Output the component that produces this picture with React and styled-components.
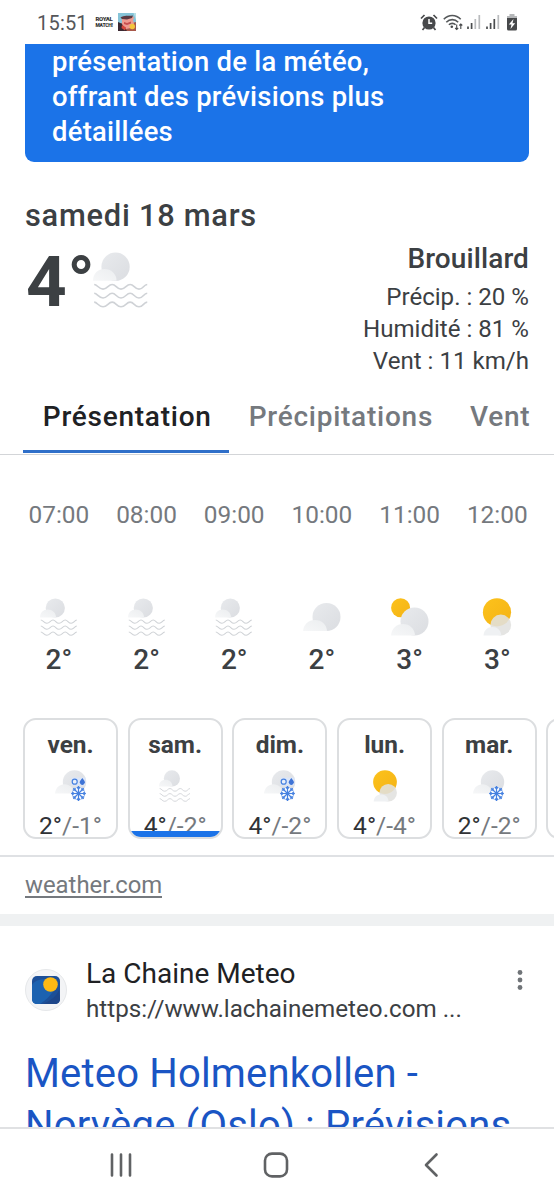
import React from "react";
import styled, { createGlobalStyle } from "styled-components";

const GlobalStyle = createGlobalStyle`
  * { box-sizing: border-box; }
  html, body { margin: 0; padding: 0; background: #fff; }
  body { font-family: Roboto, "Liberation Sans", sans-serif; color: #3c4043; overflow: hidden; }
  svg { display: block; flex: none; }
`;

const Screen = styled.div`
  width: 554px;
  height: 1200px;
  display: flex;
  flex-direction: column;
  overflow: hidden;
  background: #fff;
`;

const StatusBar = styled.header`
  flex: none;
  height: 44px;
  display: flex;
  align-items: center;
  padding: 0 36px 0 37px;
`;
const Clock = styled.span`
  width: 58px;
  font-size: 20px;
  line-height: 44px;
  letter-spacing: 0.2px;
  color: #55575a;
  padding-top: 2px;
`;
const GameLogo = styled.span`
  width: 18px;
  margin-right: 5px;
  font-weight: 900;
  text-align: center;
  color: #333;
  letter-spacing: -0.3px;
  white-space: nowrap;
`;
const LogoLine = styled.span`
  display: block;
  line-height: 7px;
  font-size: ${(p) => p.$size}px;
`;
const StatusIcons = styled.div`
  margin-left: auto;
  display: flex;
  align-items: center;
`;
const StatusIcon = styled.svg`
  margin-left: ${(p) => p.$gap}px;
`;

const Page = styled.main`
  flex: none;
  height: 1083px;
  overflow: hidden;
`;
const Banner = styled.section`
  height: 118px;
  margin: 0 25px;
  padding: 1px 27px 0;
  border-radius: 0 0 9px 9px;
  background: #1b73e8;
  color: #fff;
  font-weight: 500;
  font-size: 27.4px;
  line-height: 35px;
  letter-spacing: 0.26px;
`;
const BannerLine = styled.div`
  white-space: nowrap;
`;

const Summary = styled.section`
  height: 214px;
  padding: 34px 25px 0;
`;
const DateLine = styled.h2`
  margin: 0;
  font-size: 30.8px;
  font-weight: 500;
  line-height: 40px;
  letter-spacing: 0.75px;
`;
const SummaryRow = styled.div`
  display: flex;
  justify-content: space-between;
`;
const Current = styled.div`
  display: flex;
  align-items: flex-start;
`;
const BigTemp = styled.div`
  width: 68px;
  padding-left: 1px;
  font-size: 71px;
  font-weight: 700;
  line-height: 92px;
  letter-spacing: 0.5px;
  white-space: nowrap;
`;
const BigIcon = styled.div`
  padding-top: 16px;
`;
const Details = styled.div`
  text-align: right;
  padding-top: 6px;
`;
const Condition = styled.div`
  margin-bottom: 5px;
  font-size: 28px;
  font-weight: 500;
  line-height: 34px;
  letter-spacing: 0.1px;
`;
const Detail = styled.div`
  font-size: 24.1px;
  line-height: 32.2px;
  white-space: nowrap;
`;

const Tabs = styled.nav`
  height: 79px;
  padding-left: 23px;
  display: flex;
  border-bottom: 1px solid #d3d5d8;
`;
const Tab = styled.div`
  flex: none;
  height: 77px;
  padding: 0 ${(p) => p.$right}px 0 ${(p) => p.$left}px;
  font-size: 28px;
  font-weight: 500;
  line-height: 82px;
  letter-spacing: 0.75px;
  white-space: nowrap;
  color: ${(p) => (p.$active ? "#202124" : "#75797e")};
  border-bottom: ${(p) => (p.$active ? "3px solid #2f6fc9" : "0")};
`;

const Hours = styled.section`
  height: 263px;
  padding: 0 13px 0 15px;
  display: flex;
`;
const Hour = styled.div`
  flex: none;
  width: 87.7px;
  display: flex;
  flex-direction: column;
  align-items: center;
`;
const HourLabel = styled.div`
  margin-top: 44px;
  font-size: 24.4px;
  line-height: 32px;
  color: #75797e;
`;
const HourIcon = styled.div`
  margin-top: 67px;
`;
const HourTemp = styled.div`
  margin-top: 7px;
  font-size: 28px;
  font-weight: 500;
  line-height: 34px;
`;

const Days = styled.section`
  height: 139px;
  padding-left: 23px;
  display: flex;
  gap: 9.7px;
  border-bottom: 2px solid #dfe1e4;
  overflow: hidden;
`;
const DayCard = styled.div`
  flex: none;
  width: 95px;
  height: 121px;
  border: 2px solid #dcdee0;
  border-radius: 13px;
  overflow: hidden;
  display: flex;
  flex-direction: column;
  align-items: center;
`;
const DayName = styled.div`
  margin-top: 9px;
  font-size: 24.4px;
  font-weight: 700;
  line-height: 32px;
`;
const DayIcon = styled.div`
  flex: none;
  margin-top: 9px;
  height: 34px;
`;
const DayRange = styled.div`
  flex: none;
  margin-top: 6px;
  height: ${(p) => (p.$active ? 20.5 : 32)}px;
  overflow: hidden;
  font-size: 24.6px;
  line-height: 32px;
  color: #75797e;
  white-space: nowrap;
  b { font-weight: 400; color: #303236; }
`;
const ActiveBar = styled.div`
  flex: none;
  align-self: stretch;
  height: 8px;
  background: #1b73e8;
`;

const Source = styled.div`
  height: 57px;
  padding: 12px 25px 0;
  font-size: 23.9px;
  line-height: 32px;
  color: #75797e;
`;
const SourceLink = styled.span`
  display: inline-block;
  height: 29px;
  border-bottom: 2px solid #75797e;
`;
const Divider = styled.div`
  height: 12px;
  background: #eff1f2;
`;

const Result = styled.article`
  padding: 31px 25px 0;
`;
const ResultHead = styled.div`
  display: flex;
  height: 68px;
`;
const Favicon = styled.div`
  width: 42px;
  height: 42px;
  margin: 12px 19px 0 0;
  border-radius: 50%;
  border: 1px solid #e6e8ea;
  background: #f3f4f6;
  display: grid;
  place-items: center;
`;
const Site = styled.div`
  flex: 1;
`;
const SiteName = styled.div`
  font-size: 28px;
  line-height: 34px;
  color: #202124;
`;
const SiteUrl = styled.div`
  margin-top: 1px;
  font-size: 24.2px;
  line-height: 34px;
  white-space: nowrap;
`;
const More = styled.div`
  padding: 12px 6px 0 0;
`;
const ResultTitle = styled.h3`
  margin: 23px 0 0;
  font-size: 40px;
  font-weight: 400;
  line-height: 52px;
  letter-spacing: 0.18px;
  color: #1a55c4;
`;
const TitleLine = styled.div`
  white-space: nowrap;
`;

const NavBar = styled.footer`
  flex: none;
  height: 73px;
  border-top: 2px solid #e0e1e3;
  display: flex;
  justify-content: center;
  align-items: center;
  padding-right: 2px;
`;
const NavButton = styled.div`
  width: 155px;
  display: grid;
  place-items: center;
`;

const GradientDefs = styled.svg`
  position: absolute;
`;

function Gradients() {
  return (
    <GradientDefs width="0" height="0" aria-hidden="true">
      <defs>
        <linearGradient id="cloud" x1="0" y1="0" x2="1" y2="1">
          <stop offset="0" stopColor="#e8eaed" />
          <stop offset="1" stopColor="#dbdde1" />
        </linearGradient>
        <linearGradient id="puff" x1="0" y1="1" x2="1" y2="0">
          <stop offset="0" stopColor="#f6f7f8" />
          <stop offset="1" stopColor="#eceef0" />
        </linearGradient>
        <linearGradient id="sun" x1="0" y1="0" x2="1" y2="1">
          <stop offset="0" stopColor="#fcc21c" />
          <stop offset="1" stopColor="#f4b315" />
        </linearGradient>
      </defs>
    </GradientDefs>
  );
}

function Fog({ size }) {
  return (
    <svg width={size} height={size} viewBox="0 0 38 38">
      <circle cx="15.3" cy="10" r="9.6" fill="url(#cloud)" />
      <path d="M0 19.500C0 14.400 3.500 11.500 7.800 11.500S16 14.600 16 19.500z" fill="url(#puff)" />
      {[22, 28, 34].map((y) => (
        <path
          key={y}
          d={`M.8 ${y}c2.200 0 3 3.200 6 3.200s3.600-3.200 6.200-3.200 3 3.200 6 3.200 3.600-3.200 6.200-3.200 3 3.200 6 3.200 3-3 5.600-3.200`}
          fill="none"
          stroke="#cfd2d6"
          strokeWidth="1.050"
        />
      ))}
    </svg>
  );
}

function Cloud({ size }) {
  return (
    <svg width={size} height={size} viewBox="0 0 38 38">
      <circle cx="23.500" cy="19" r="14" fill="url(#cloud)" />
      <path d="M0 33C.6 26.500 5.400 22 12 22s11.500 4.500 12.100 11z" fill="url(#puff)" />
    </svg>
  );
}

function SunCloud({ size }) {
  return (
    <svg width={size} height={size} viewBox="0 0 38 38">
      <circle cx="9.600" cy="9.800" r="9.500" fill="url(#sun)" />
      <circle cx="23.500" cy="23.500" r="14" fill="url(#cloud)" />
      <path d="M0 37.500C.6 30.500 5.400 26 12 26s11.500 4.500 12.100 11.500z" fill="url(#puff)" />
    </svg>
  );
}

function MostlySunny({ size }) {
  return (
    <svg width={size} height={size} viewBox="0 0 38 38">
      <circle cx="19" cy="14.300" r="14.100" fill="url(#sun)" />
      <circle cx="22.800" cy="27" r="10.400" fill="#e1e1df" fillOpacity=".88" />
      <path d="M5.500 37.500C6 32 9.500 29 14.400 29s8.400 3 8.900 8.500z" fill="#eff1f3" />
    </svg>
  );
}

function Flake({ x, y }) {
  return (
    <g transform={`translate(${x} ${y})`} stroke="#4681e0" strokeWidth="1.150" fill="none">
      {[0, 45, 90, 135, 180, 225, 270, 315].map((a) => (
        <path key={a} d="M0 0V-7.400M-1.700-6.500L0-4.600 1.700-6.500" transform={`rotate(${a})`} />
      ))}
    </g>
  );
}

function Snow({ mixed }) {
  return (
    <svg width="34" height="34" viewBox="0 0 34 34">
      <circle cx="20.500" cy="12" r="11.700" fill="url(#cloud)" />
      <path d="M1 23.500C1.500 18 5.500 14.300 10.500 14.300S19.600 18 20.100 23.500z" fill="url(#puff)" />
      <circle cx="24.500" cy="23.500" r="7" fill="#f3f7fd" />
      <Flake x={24.5} y={23.5} />
      {mixed && (
        <g>
          <rect x="17.500" y="7.500" width="14" height="8" fill="#dce6f7" />
          <circle cx="20.700" cy="11.700" r="2.500" fill="#eaf0fa" stroke="#4681e0" strokeWidth="1.200" />
          <path d="M28.300 8l1.900 2.400a2.600 2.600 0 1 1-3.800 0z" fill="#3f74d6" />
        </g>
      )}
    </svg>
  );
}

const icons = {
  fog: (s) => <Fog size={s} />,
  cloud: (s) => <Cloud size={s} />,
  sunCloud: (s) => <SunCloud size={s} />,
  sunny: (s) => <MostlySunny size={s} />,
  snow: () => <Snow />,
  mixed: () => <Snow mixed />,
};

function PigIcon() {
  return (
    <svg width="18" height="18" viewBox="0 0 18 18">
      <rect width="18" height="18" fill="#86c4d8" />
      <path d="M0 13l4-3h10l4-1v9H0z" fill="#a8584a" />
      <path d="M4 5l2-2 3 1.500L13 3l3 1-1 3 1 4-3 4-5 1-4-4z" fill="#ee9a90" />
      <path d="M2.500 4.500C6 2 10 3 15 2.500L14 5 9 6.500 4 6z" fill="#5a3a42" />
      <path d="M6 9l3 1 4-1.500v2L9 12l-3-1z" fill="#c94f4f" />
      <path d="M0 9l3.500 1.500L9 18H0z" fill="#3b2932" />
      <path d="M4 12l4 2.500-1 3L3.500 15z" fill="#d8463c" />
      <circle cx="14.300" cy="13.500" r="2.700" fill="#f4c53c" />
      <path d="M15.500 0H18v7z" fill="#b7dfe5" />
    </svg>
  );
}

function Signal({ strong, gap }) {
  return (
    <StatusIcon $gap={gap} width="14" height="16" viewBox="0 0 14 16">
      <path d="M1 12.500V15M4.600 9V15" stroke="#4a4c4e" strokeWidth="1.700" />
      <path d="M8.300 5V15" stroke={strong ? "#4a4c4e" : "#b9bbbd"} strokeWidth="1.700" />
      <path d="M12.300 1V15" stroke="#b9bbbd" strokeWidth="1.700" />
    </StatusIcon>
  );
}

const hours = [
  ["07:00", "fog", "2°"],
  ["08:00", "fog", "2°"],
  ["09:00", "fog", "2°"],
  ["10:00", "cloud", "2°"],
  ["11:00", "sunCloud", "3°"],
  ["12:00", "sunny", "3°"],
];

const days = [
  ["ven.", "mixed", "2°", "-1°"],
  ["sam.", "fog", "4°", "-2°"],
  ["dim.", "mixed", "4°", "-2°"],
  ["lun.", "sunny", "4°", "-4°"],
  ["mar.", "snow", "2°", "-2°"],
];

export default function App() {
  return (
    <Screen>
      <GlobalStyle />
      <Gradients />
      <StatusBar>
        <Clock>15:51</Clock>
        <GameLogo>
          <LogoLine $size={6}>ROYAL</LogoLine>
          <LogoLine $size={5}>MATCH!</LogoLine>
        </GameLogo>
        <PigIcon />
        <StatusIcons>
          <StatusIcon $gap={0} width="18" height="17" viewBox="0 0 18 17">
            <circle cx="9" cy="9" r="6.600" fill="#47494b" />
            <path d="M1 4.500L4.500 1M17 4.500L13.500 1M4.500 13.500L2.500 16M13.500 13.500L15.500 16" stroke="#47494b" strokeWidth="1.700" />
            <path d="M9 5v4.200h3.200" stroke="#fff" strokeWidth="1.500" fill="none" />
          </StatusIcon>
          <StatusIcon $gap={5} width="20" height="17" viewBox="0 0 20 17">
            <path d="M.8 5.300C5.500.2 13 .2 17.700 5.300M3.300 8.200c3.400-3.500 8.500-3.500 11.900 0M5.900 10.800c1.900-1.900 4.800-1.900 6.700 0" fill="none" stroke="#55585a" strokeWidth="1.600" />
            <circle cx="8.800" cy="12.700" r="1.300" fill="#47494b" />
            <path d="M13.700 10.500v5M12.200 14l1.500 1.500 1.500-1.500M17.800 15v-5M16.300 11.500l1.500-1.500 1.500 1.500" fill="none" stroke="#47494b" strokeWidth="1.100" />
          </StatusIcon>
          <Signal gap={4} />
          <Signal gap={5} strong />
          <StatusIcon $gap={6} width="12" height="17" viewBox="0 0 12 17">
            <path d="M3.500 0h5v2H11v3H1V2h2.500z" fill="#b5b7b9" />
            <path d="M1 4h10v11a1.500 1.500 0 0 1-1.500 1.500h-7A1.500 1.500 0 0 1 1 15z" fill="#47494b" />
            <path d="M7.500 5L2.800 10.500h2.700L4.500 15l4.700-5.700H6.500z" fill="#fff" />
          </StatusIcon>
        </StatusIcons>
      </StatusBar>

      <Page>
        <Banner>
          <BannerLine>présentation de la météo,</BannerLine>
          <BannerLine>offrant des prévisions plus</BannerLine>
          <BannerLine>détaillées</BannerLine>
        </Banner>

        <Summary>
          <DateLine>samedi 18 mars</DateLine>
          <SummaryRow>
            <Current>
              <BigTemp>4°</BigTemp>
              <BigIcon><Fog size={56} /></BigIcon>
            </Current>
            <Details>
              <Condition>Brouillard</Condition>
              <Detail>Précip. : 20 %</Detail>
              <Detail>Humidité : 81 %</Detail>
              <Detail>Vent : 11 km/h</Detail>
            </Details>
          </SummaryRow>
        </Summary>

        <Tabs>
          <Tab $active $left={19.8} $right={17}>Présentation</Tab>
          <Tab $left={20} $right={19}>Précipitations</Tab>
          <Tab $left={18} $right={18}>Vent</Tab>
        </Tabs>

        <Hours>
          {hours.map(([label, icon, temp]) => (
            <Hour key={label}>
              <HourLabel>{label}</HourLabel>
              <HourIcon>{icons[icon](38)}</HourIcon>
              <HourTemp>{temp}</HourTemp>
            </Hour>
          ))}
        </Hours>

        <Days>
          {days.map(([name, icon, high, low]) => {
            const active = name === "sam.";
            return (
              <DayCard key={name}>
                <DayName>{name}</DayName>
                <DayIcon>{icons[icon](32)}</DayIcon>
                <DayRange $active={active}><b>{high}</b>/{low}</DayRange>
                {active && <ActiveBar />}
              </DayCard>
            );
          })}
          <DayCard />
        </Days>

        <Source><SourceLink>weather.com</SourceLink></Source>
        <Divider />

        <Result>
          <ResultHead>
            <Favicon>
              <svg width="28" height="28" viewBox="0 0 28 28">
                <rect width="28" height="28" rx="5" fill="#1c4f98" />
                <path d="M0 9C3 3 14 1 20 6c5 6 0 14-12 22H5c-3 0-5-2-5-5z" fill="#1c62b0" />
                <path d="M27 14c-3 7-9 11-16 14h12c3 0 5-2 5-5z" fill="#1d468a" />
                <circle cx="18.500" cy="8.500" r="7.300" fill="#fdb913" />
              </svg>
            </Favicon>
            <Site>
              <SiteName>La Chaine Meteo</SiteName>
              <SiteUrl>https://www.lachainemeteo.com ...</SiteUrl>
            </Site>
            <More>
              <svg width="6" height="22" viewBox="0 0 6 22" fill="#707478">
                <circle cx="3" cy="3.500" r="2.400" />
                <circle cx="3" cy="11" r="2.400" />
                <circle cx="3" cy="18.500" r="2.400" />
              </svg>
            </More>
          </ResultHead>
          <ResultTitle>
            <TitleLine>Meteo Holmenkollen -</TitleLine>
            <TitleLine>Norvège (Oslo) : Prévisions</TitleLine>
          </ResultTitle>
        </Result>
      </Page>

      <NavBar>
        <NavButton>
          <svg width="24" height="26" viewBox="0 0 24 26" stroke="#606264" strokeWidth="2.600" strokeLinecap="round">
            <path d="M3 2.500V23.500M12 2.500V23.500M21 2.500V23.500" />
          </svg>
        </NavButton>
        <NavButton>
          <svg width="26" height="26" viewBox="0 0 26 26">
            <rect x="2" y="1.600" width="22" height="22.800" rx="7" fill="none" stroke="#606264" strokeWidth="2.600" />
          </svg>
        </NavButton>
        <NavButton>
          <svg width="16" height="26" viewBox="0 0 16 26">
            <path d="M13.500 2.500L3 13l10.500 10.500" fill="none" stroke="#606264" strokeWidth="2.600" strokeLinecap="round" strokeLinejoin="round" />
          </svg>
        </NavButton>
      </NavBar>
    </Screen>
  );
}
